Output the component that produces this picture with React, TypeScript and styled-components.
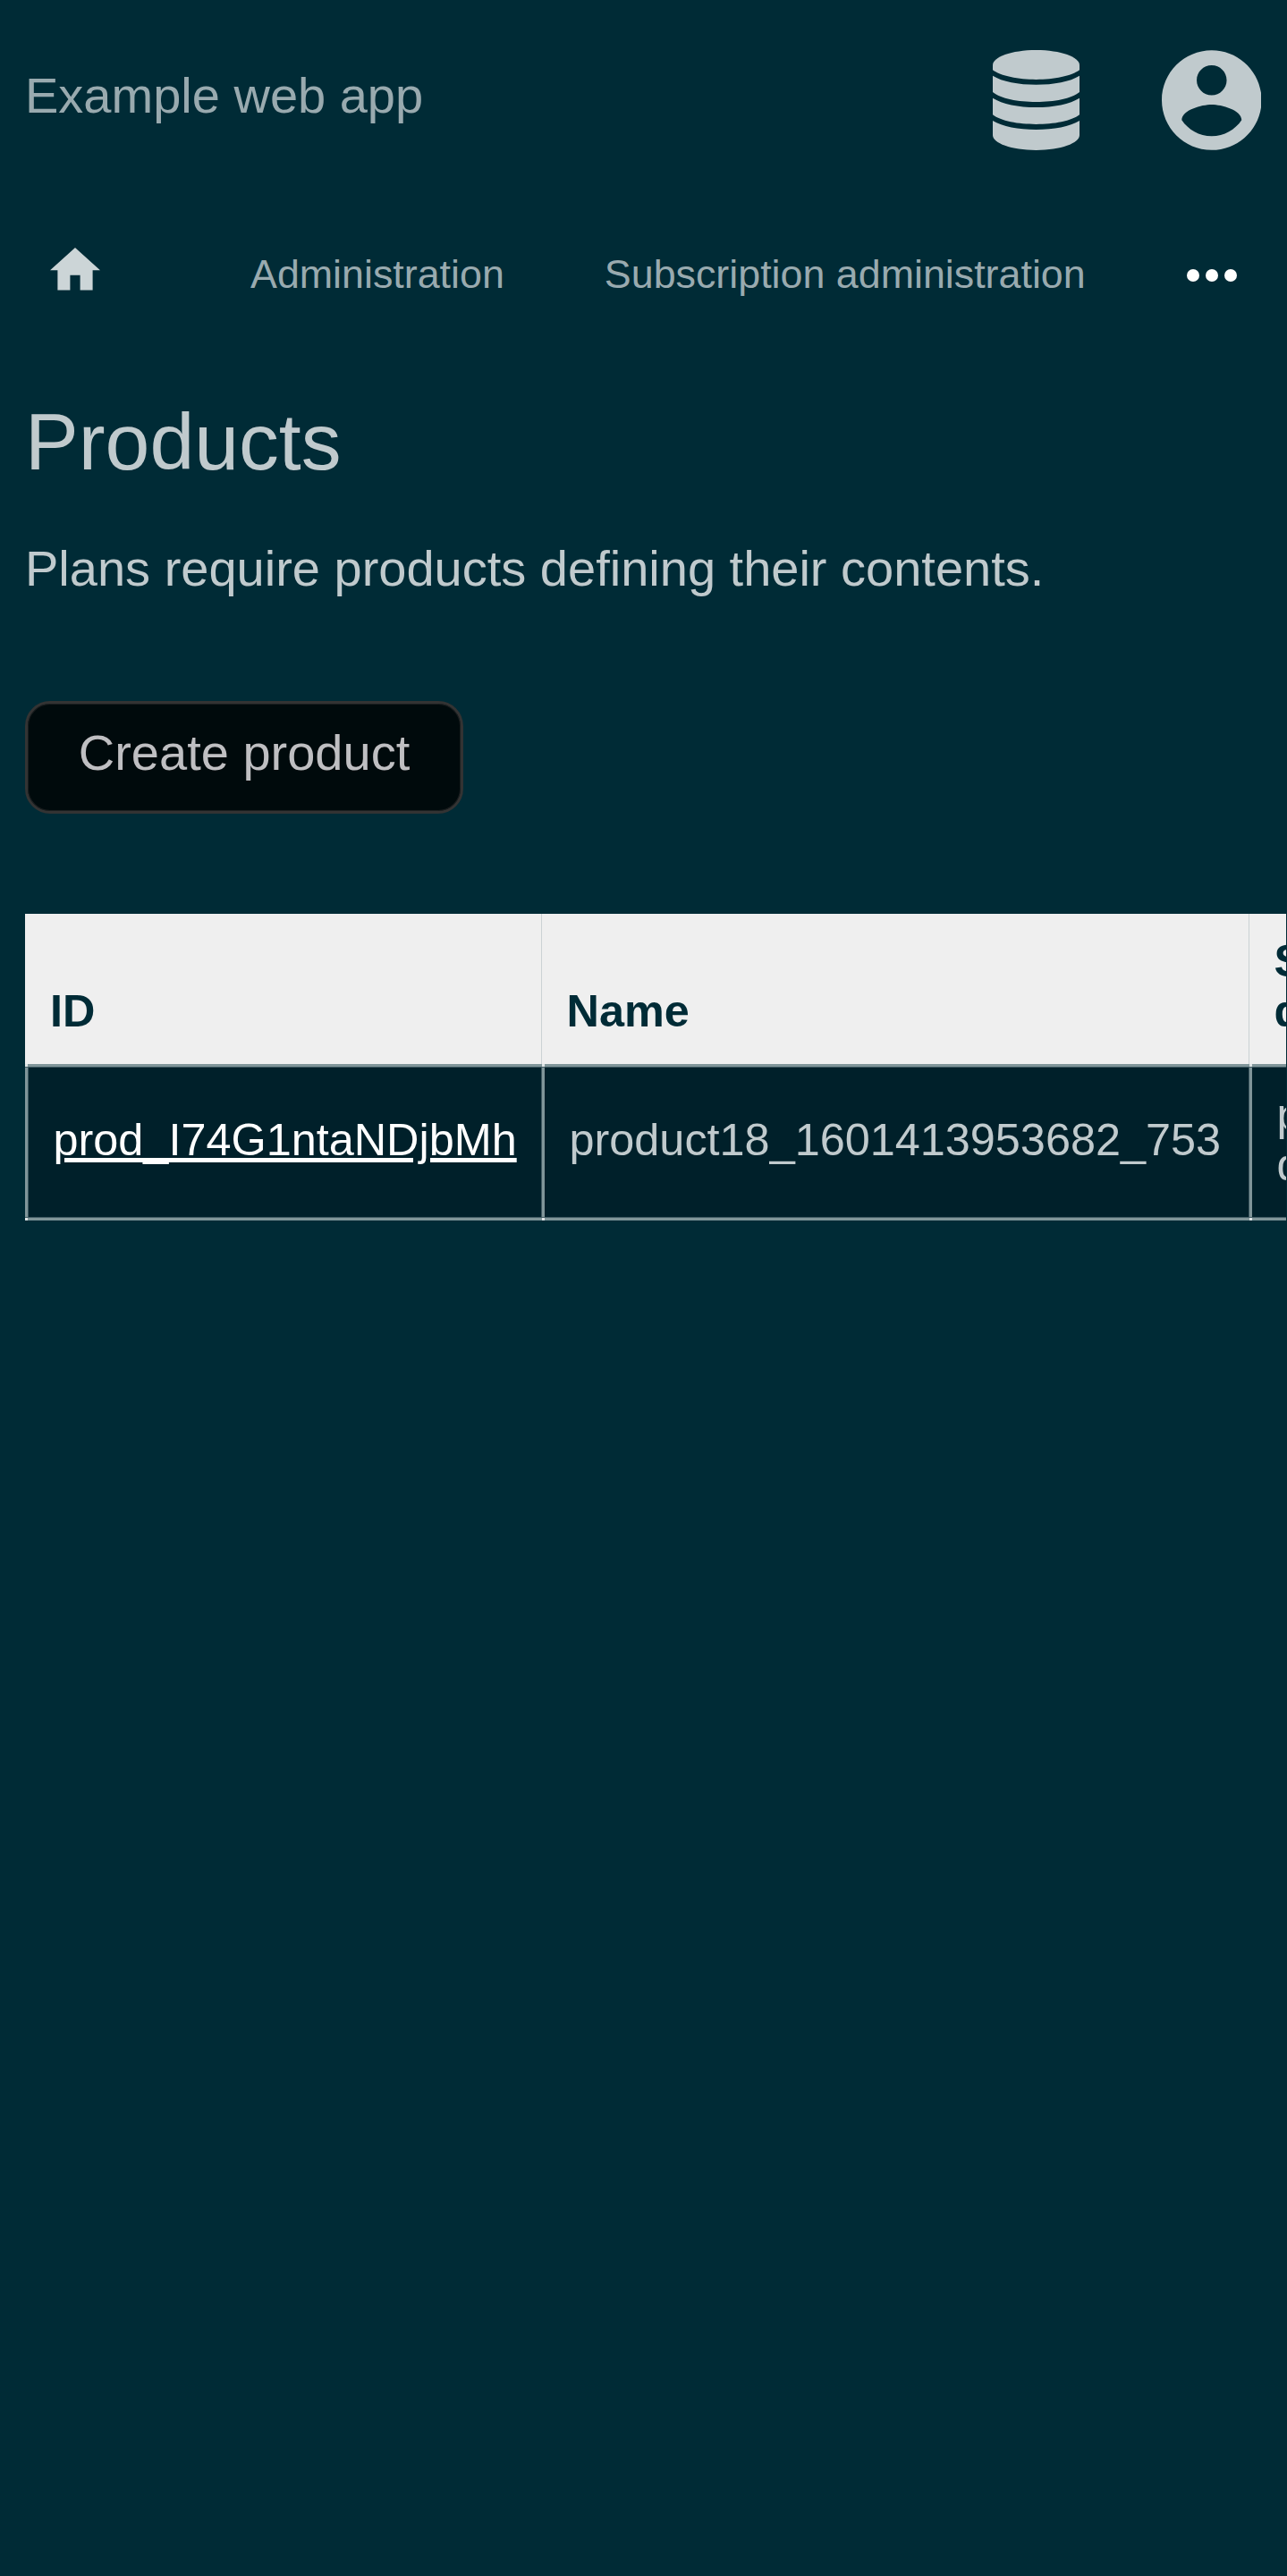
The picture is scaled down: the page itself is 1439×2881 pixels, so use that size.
import React from 'react';
import styled, { createGlobalStyle } from 'styled-components';

const GlobalStyle = createGlobalStyle`
  * { box-sizing: border-box; }
  html, body { margin: 0; padding: 0; background: #002b36; overflow: hidden; }
  body { font-family: "Liberation Sans", Arial, sans-serif; font-size: 56px; color: #c0cacd; }
`;

const Page = styled.div`
  width: 1439px;
  height: 2881px;
  overflow: hidden;
`;

const Header = styled.header`
  display: flex;
  justify-content: space-between;
  align-items: flex-start;
  height: 224px;
  padding: 56px 28.6px 0 28px;
`;

const Brand = styled.a`
  margin-top: 19px;
  line-height: 63px;
  color: #99aaaf;
`;

const HeaderIcons = styled.div`
  display: flex;
  gap: 91.4px;
  color: #c0cacd;
  svg { display: block; }
`;

const Nav = styled.nav`
  display: flex;
  height: 168px;
  padding: 53px 56.5px 0 56px;
  color: #99aaaf;
  font-size: 44.8px;
  line-height: 51px;
  white-space: nowrap;
  svg { display: block; }
`;

const HomeLink = styled.a`
  width: 224px;
  color: #ccd5d7;
`;

const NavLink = styled.a`
  margin-top: 4px;
  margin-right: 112px;
`;

const More = styled.a`
  margin-top: 24px;
  margin-left: auto;
  color: #fff;
`;

const Main = styled.main`
  padding: 51px 0 0 28px;
`;

const Title = styled.h1`
  margin: 0;
  font-size: 89.6px;
  font-weight: 400;
  line-height: 102px;
`;

const Lead = styled.p`
  margin: 59px 0 0;
  line-height: 64px;
`;

const CreateButton = styled.button`
  display: block;
  width: 490px;
  height: 126px;
  margin: 116px 0 0;
  padding: 0 0 10px;
  border: 3px solid #333;
  border-radius: 28px;
  background: #000a0c;
  box-shadow: inset 0 0 0 1px #1a1f20;
  color: #bfbfc2;
  font: inherit;
  line-height: 64px;
`;

const TableClip = styled.div`
  width: 1410px;
  margin-top: 112px;
  overflow: hidden;
`;

const columns = '577px 791px 400px';

const HeadRow = styled.div`
  display: grid;
  grid-template-columns: ${columns};
  width: 1768px;
  height: 168px;
  background: #efefef;
`;

const HeadCell = styled.div`
  display: flex;
  align-items: flex-end;
  padding: 0 200px 31px 27.6px;
  border-left: 1px solid #cbd2d4;
  color: #002b36;
  font-size: 50.4px;
  font-weight: 700;
  line-height: 56px;
  &:first-child {
    padding-left: 28px;
    border-left: 0;
  }
`;

const BodyRow = styled.div`
  display: grid;
  grid-template-columns: ${columns};
  width: 1768px;
  height: 175px;
`;

/* Translucent rules: a 3px line with a fainter 1px edge, lighter where they cross. */
const Cell = styled.div<{ $edge?: boolean }>`
  --line: #809599;
  --faint: #405a62;
  --cross: #dfe5e6;
  display: flex;
  align-items: center;
  padding: 0 0 5px 31.5px;
  font-size: 50.4px;
  line-height: 56px;
  background-color: #00202a;
  background-repeat: no-repeat;
  background-image:
    linear-gradient(var(--cross), var(--cross)),
    linear-gradient(var(--cross), var(--cross)),
    linear-gradient(to bottom, var(--line) 3px, var(--faint) 3px),
    linear-gradient(to top, var(--line) 3px, var(--faint) 3px),
    linear-gradient(to ${(p) => (p.$edge ? 'right' : 'left')}, var(--line) 3px, var(--faint) 3px);
  background-size: 3px 3px, 3px 3px, 100% 4px, 100% 4px, 4px 100%;
  background-position:
    ${(p) => (p.$edge ? '0' : '1px')} 0,
    ${(p) => (p.$edge ? '0' : '1px')} 100%,
    0 0, 0 100%, 0 0;
`;

const ProductLink = styled.a`
  color: #fff;
  text-decoration: underline;
`;

const App = () => (
  <Page>
    <GlobalStyle />
    <Header>
      <Brand>Example web app</Brand>
      <HeaderIcons>
        <svg width="97" height="112" viewBox="0 0 291 336" fill="currentColor">
          <path d="M0 50C0 24 62 0 145.500 0S291 24 291 50V67C265 87 205 99 145.500 99S26 87 0 67Z" />
          <path d="M0 86C32 106 86 116 145.500 116S259 106 291 86V141C265 163 205 174 145.500 174S26 163 0 141Z" />
          <path d="M0 161C32 181 86 192 145.500 192S259 181 291 161V217C265 238 205 249 145.500 249S26 238 0 217Z" />
          <path d="M0 237C32 257 86 267 145.500 267S259 257 291 237V286C291 312 229 336 145.500 336S0 312 0 286Z" />
        </svg>
        <svg width="111.600" height="112" viewBox="2 2 20 20" fill="currentColor">
          <path d="M12 2C6.480 2 2 6.480 2 12s4.480 10 10 10 10-4.480 10-10S17.520 2 12 2zm0 3c1.660 0 3 1.340 3 3s-1.340 3-3 3-3-1.340-3-3 1.340-3 3-3zm0 14.200c-2.500 0-4.710-1.280-6-3.220.030-1.990 4-3.080 6-3.080 1.990 0 5.970 1.090 6 3.080-1.290 1.940-3.500 3.220-6 3.220z" />
        </svg>
      </HeaderIcons>
    </Header>
    <Nav>
      <HomeLink>
        <svg width="56" height="48" viewBox="2 3 20 17.143" fill="currentColor">
          <path d="M10 20v-6h4v6h5v-8h3L12 3 2 12h3v8z" />
        </svg>
      </HomeLink>
      <NavLink>Administration</NavLink>
      <NavLink>Subscription administration</NavLink>
      <More>
        <svg width="56" height="14" viewBox="0 0 56 14" fill="currentColor">
          <circle cx="7" cy="7" r="7" />
          <circle cx="28" cy="7" r="7" />
          <circle cx="49" cy="7" r="7" />
        </svg>
      </More>
    </Nav>
    <Main>
      <Title>Products</Title>
      <Lead>Plans require products defining their contents.</Lead>
      <CreateButton>Create product</CreateButton>
      <TableClip>
        <HeadRow>
          <HeadCell>ID</HeadCell>
          <HeadCell>Name</HeadCell>
          <HeadCell>Statement descriptor</HeadCell>
        </HeadRow>
        <BodyRow>
          <Cell $edge><ProductLink>prod_I74G1ntaNDjbMh</ProductLink></Cell>
          <Cell>product18_1601413953682_753</Cell>
          <Cell>product18 description</Cell>
        </BodyRow>
      </TableClip>
    </Main>
  </Page>
);

export default App;
